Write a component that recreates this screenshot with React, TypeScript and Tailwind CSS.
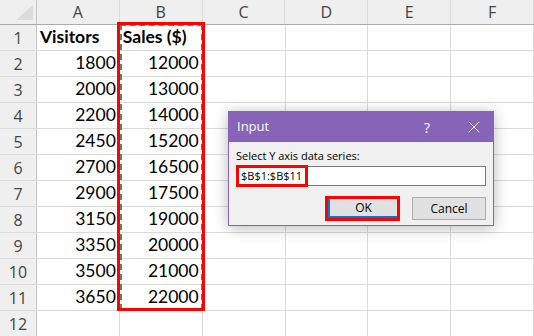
import { X } from 'lucide-react';

const cols = ['A', 'B', 'C', 'D', 'E', 'F'];

const data: [string, string][] = [
  ['Visitors', 'Sales ($)'],
  ['1800', '12000'],
  ['2000', '13000'],
  ['2200', '14000'],
  ['2450', '15200'],
  ['2700', '16500'],
  ['2900', '17500'],
  ['3150', '19000'],
  ['3350', '20000'],
  ['3500', '21000'],
  ['3650', '22000'],
  ['', ''],
];

export default function App() {
  return (
    <div className="relative w-[534px] h-[336px] overflow-hidden bg-white font-['Lato',sans-serif] text-black">
      {/* Column headers */}
      <div className="flex h-[25px] bg-[#efefef] border-b border-[#ababab]">
        <div className="relative w-[37px] border-r border-[#c6c6c6]">
          <svg className="absolute left-[16px] top-[5px]" width="17" height="15" viewBox="0 0 17 15">
            <polygon points="17,0 17,15 0,15" fill="#dcdcdc" />
          </svg>
        </div>
        {cols.map((c) => (
          <div
            key={c}
            className="w-[83px] border-r border-[#d9d9d9] flex items-center justify-center text-[16px] text-[#444] font-['Open_Sans',sans-serif]"
          >
            {c}
          </div>
        ))}
      </div>

      {/* Rows */}
      {data.map(([a, b], i) => (
        <div key={i} className="flex h-[26px] border-b border-[#dadada]">
          <div className="w-[37px] bg-[#efefef] border-r border-[#c6c6c6] flex items-center justify-center text-[16px] text-[#444] font-['Open_Sans',sans-serif]">
            {i + 1}
          </div>
          <div
            className={`w-[83px] border-r border-[#dadada] flex items-center px-[3px] text-[17.5px] ${
              i === 0 ? 'justify-start font-bold' : 'justify-end'
            }`}
          >
            {a}
          </div>
          <div
            className={`w-[83px] border-r border-[#dadada] flex items-center px-[3px] text-[17.5px] ${
              i === 0 ? 'justify-start font-bold' : 'justify-end'
            }`}
          >
            {b}
          </div>
          <div className="w-[83px] border-r border-[#dadada]" />
          <div className="w-[83px] border-r border-[#dadada]" />
          <div className="w-[83px] border-r border-[#dadada]" />
          <div className="w-[83px] border-r border-[#dadada]" />
        </div>
      ))}

      {/* Copy marquee + red highlight on column B */}
      <div className="absolute left-[120px] top-[24px] w-[83px] h-[286px] border-2 border-dashed border-[#4a8a68]" />
      <div className="absolute left-[117px] top-[22px] w-[88px] h-[289px] border-[3px] border-[#ff0000]" />

      {/* Input dialog */}
      <div className="absolute left-[228px] top-[111px] w-[266px] h-[115px] border border-[#8764b8] bg-[#f0f0f0] shadow-[0_2px_14px_rgba(0,0,0,0.28)] font-['Open_Sans',sans-serif]">
        <div className="flex items-center h-[30px] bg-[#8764b8] text-white pl-[8px]">
          <span className="text-[13px] flex-1">Input</span>
          <span className="text-[14px] w-[10px] text-center mr-[32px]">?</span>
          <X className="w-[20px] h-[20px] mr-[9px]" strokeWidth={1.1} />
        </div>
        <div className="px-[7px]">
          <div className="mt-[6px] h-[16px] text-[11px] leading-[16px] text-black">Select Y axis data series:</div>
          <div className="relative mt-[2px] h-[20px] bg-white border border-[#7a7a7a] flex items-center pl-[4px] text-[11px]">
            $B$1:$B$11
            <div className="absolute left-[-1px] top-[-2px] w-[72px] h-[22px] border-[3px] border-[#ff0000]" />
          </div>
          <div className="flex justify-end items-center mt-[10px] gap-[12px]">
            <div className="w-[75px] h-[25px] border-[3px] border-[#ff0000]">
              <div className="h-full border-l-2 border-b-2 border-[#0078d7] bg-[#e1e1e1] flex items-center justify-center text-[12px]">
                OK
              </div>
            </div>
            <div className="w-[74px] h-[23px] border border-[#adadad] bg-[#e1e1e1] flex items-center justify-center text-[12px]">
              Cancel
            </div>
          </div>
        </div>
      </div>
    </div>
  );
}
